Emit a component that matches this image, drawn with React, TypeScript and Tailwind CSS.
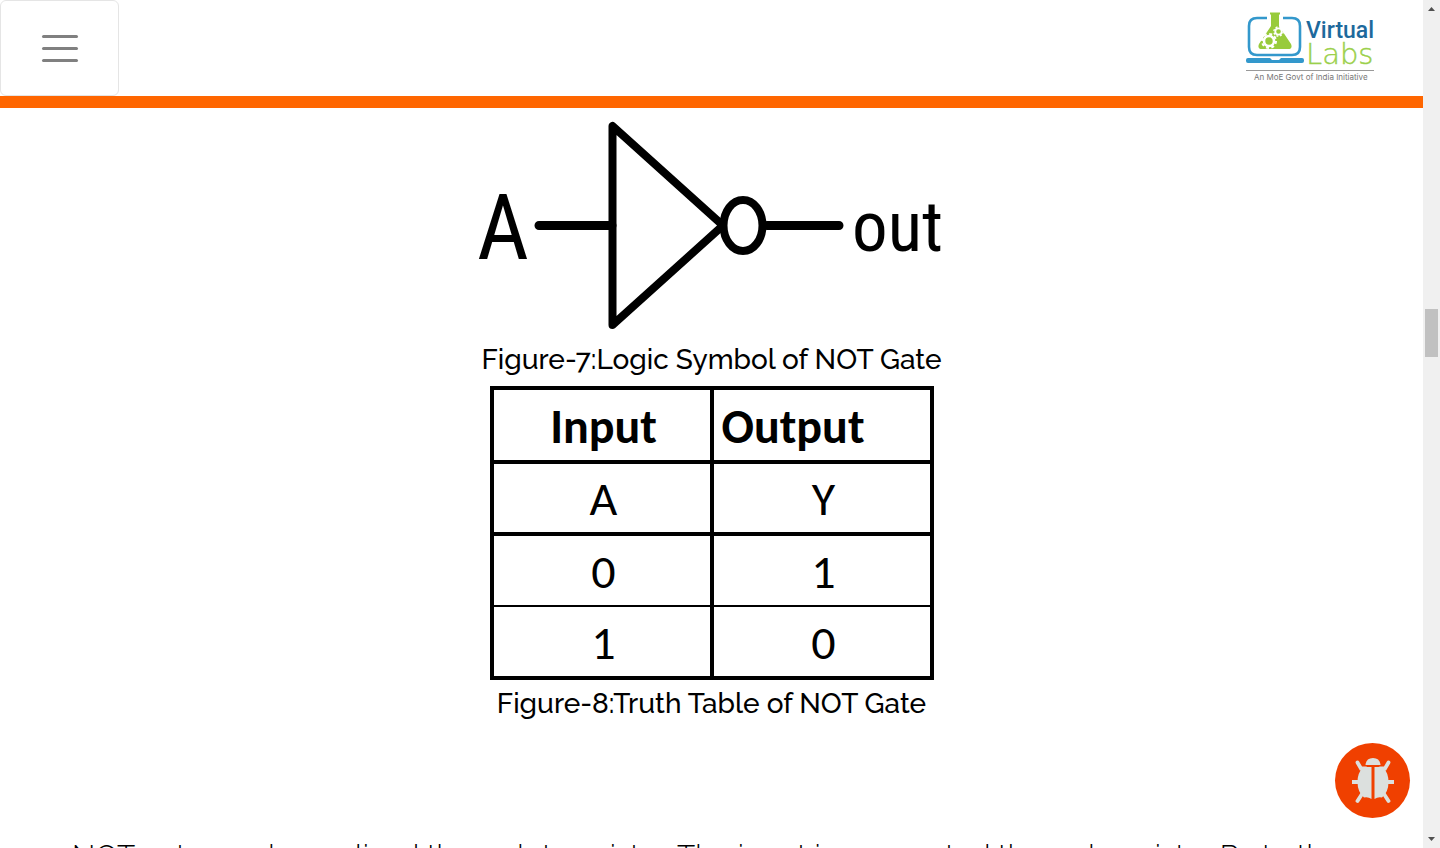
const rows = [
  { input: "A", output: "Y", line: "border-b-4" },
  { input: "0", output: "1", line: "border-b-2" },
  { input: "1", output: "0", line: "" },
];

function Logo() {
  return (
    <svg viewBox="0 0 130 72" className="h-[72px] w-[130px]" role="img" aria-label="Virtual Labs">
      <path d="M21 6H11Q3 6 3 14V35Q3 43 11 43H46Q54 43 54 35V14Q54 6 46 6H37" fill="none" stroke="#3398cc" strokeWidth="2.600" />
      <path d="M2 46H24L26 48H33L35 46H56Q58 46 58 48V49Q58 51 56 51H2Q0 51 0 49V48Q0 46 2 46Z" fill="#3398cc" />
      <path d="M24 0.500H34V2.500H33V14L45 32Q47 37 42 37H16Q11 37 13 32L25 14V2.500H24Z" fill="#98cb3b" />
      <circle cx="23" cy="29" r="5" fill="none" stroke="#fff" strokeWidth="2.600" />
      <circle cx="23" cy="29" r="7" fill="none" stroke="#fff" strokeWidth="2" strokeDasharray="3 2.500" />
      <circle cx="32.500" cy="19.500" r="3.200" fill="none" stroke="#fff" strokeWidth="1.800" />
      <circle cx="32.500" cy="19.500" r="4.600" fill="none" stroke="#fff" strokeWidth="1.400" strokeDasharray="2 1.610" />
      <text x="60" y="26" fontFamily="Roboto, sans-serif" fontSize="23" fontWeight="500" fill="#1d699c">Virtual</text>
      <text x="60" y="52" fontFamily="DejaVu Sans, sans-serif" fontSize="29" fontWeight="200" fill="#9bd04a" stroke="#9bd04a" strokeWidth="0.400">Labs</text>
      <path d="M0 58.500H128" stroke="#999" />
      <text x="8" y="68" fontFamily="Inter, sans-serif" fontSize="8" fill="#777">An MoE Govt of India Initiative</text>
    </svg>
  );
}

function NotGate() {
  return (
    <svg viewBox="0 0 470 220" className="h-[220px] w-[470px]" role="img" aria-label="NOT gate with input A and output out">
      <g fill="none" stroke="#000" strokeLinecap="round" strokeLinejoin="round">
        <path d="M62 109.500H135M290 109.500H362" strokeWidth="9" />
        <path d="M135.500 10V209L246 109.500Z" strokeWidth="8" />
        <ellipse cx="266" cy="109.500" rx="19.500" ry="25.500" strokeWidth="8" fill="#fff" />
      </g>
      <text x="0" y="143" fontFamily="Roboto Condensed, DejaVu Sans Condensed, sans-serif" fontSize="90">A</text>
      <text x="375" y="135" fontFamily="Roboto Condensed, DejaVu Sans Condensed, sans-serif" fontSize="71">out</text>
    </svg>
  );
}

function Bug() {
  return (
    <svg viewBox="15 13 75 75" className="size-full" aria-hidden="true">
      <path d="M45.500 35Q46 28 53 28T60.500 35Z" fill="#dce0de" />
      <path d="M51.500 37V69Q48 66.500 44 67.500Q37.500 62 37.500 52Q37.500 43 43 37Z" fill="#dce0de" />
      <path d="M54.500 37V69Q58 66.500 62 67.500Q68.500 62 68.500 52Q68.500 43 63 37Z" fill="#dce0de" />
      <path d="M37.500 32.500L41 38.500H46M68.500 32.500L65 38.500H60M37.500 71L42 64M68.500 71L64 64" fill="none" stroke="#dce0de" strokeWidth="3.800" strokeLinecap="round" />
      <path d="M32 52H39M67 52H74" stroke="#dce0de" strokeWidth="3.800" />
    </svg>
  );
}

export default function App() {
  return (
    <div className="flex h-screen overflow-hidden bg-white text-black">
      <div className="relative flex min-w-0 flex-1 flex-col">
        <header className="flex h-[108px] shrink-0 items-start justify-between border-b-[12px] border-[#ff6600] pr-[47px]">
          <button type="button" aria-label="Toggle navigation" className="flex h-24 w-[119px] flex-col items-center justify-center gap-[9px] rounded-md border border-[#e5e5e5]">
            <span className="h-[3px] w-9 rounded-full bg-[#808080]" />
            <span className="h-[3px] w-9 rounded-full bg-[#808080]" />
            <span className="h-[3px] w-9 rounded-full bg-[#808080]" />
          </button>
          <a href="#home" className="mt-3 block">
            <Logo />
          </a>
        </header>
        <main className="flex min-h-0 flex-1 flex-col items-center overflow-hidden pt-2 font-[Raleway,Lato,sans-serif] text-[30px] leading-9">
          <figure className="flex flex-col items-center">
            <NotGate />
            <figcaption className="mt-1.5 text-[28px] font-medium">Figure-7:Logic Symbol of NOT Gate</figcaption>
          </figure>
          <figure className="mt-2 flex flex-col items-center">
            <table className="w-[444px] table-fixed border-collapse border-4 border-black text-center font-[Carlito,'Open_Sans',sans-serif] text-[48px] leading-none">
              <thead>
                <tr className="h-[74px] border-b-4 border-black">
                  <th className="border-r-4 border-black p-0 pt-1 pl-1 font-bold">Input</th>
                  <th className="p-0 pt-1 pl-2 text-left font-bold">Output</th>
                </tr>
              </thead>
              <tbody>
                {rows.map((row) => (
                  <tr key={row.input} className={`h-[72px] border-black ${row.line}`}>
                    <td className="border-r-4 border-black p-0 pt-0.5 pl-1">{row.input}</td>
                    <td className="p-0 pt-0.5 pl-1">{row.output}</td>
                  </tr>
                ))}
              </tbody>
            </table>
            <figcaption className="mt-1.5 text-[28px] font-medium">Figure-8:Truth Table of NOT Gate</figcaption>
          </figure>
          <p className="mt-[116px] w-full shrink-0 px-[72px] font-light">
            NOT gate can be realized through transistor. The input is connected through resistor R2 to the
          </p>
        </main>
        <button type="button" aria-label="Report a bug" className="absolute right-[13px] bottom-[30px] size-[75px] rounded-full bg-[#f04000]">
          <Bug />
        </button>
      </div>
      <div className="flex w-[17px] shrink-0 flex-col items-center bg-[#f0f0f0]" aria-hidden="true">
        <svg viewBox="0 0 17 17" className="size-[17px]"><path d="M5 11L8.500 7L12 11Z" fill="#505050" /></svg>
        <div className="mt-[292px] h-12 w-[13px] bg-[#c1c1c1]" />
        <svg viewBox="0 0 17 17" className="mt-auto size-[17px]"><path d="M5 6L8.500 10L12 6Z" fill="#505050" /></svg>
      </div>
    </div>
  );
}
